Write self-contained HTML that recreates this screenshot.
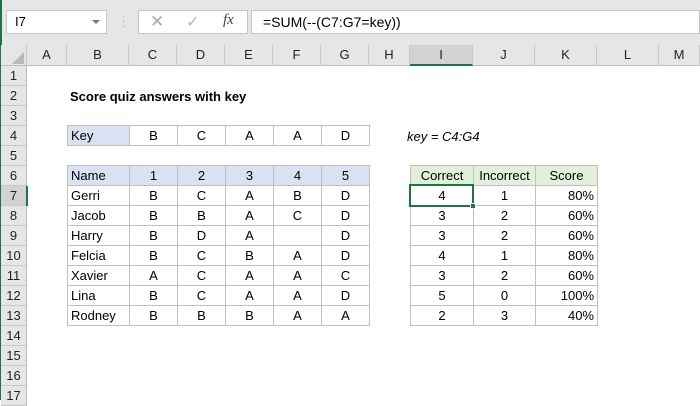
<!DOCTYPE html><html><head><style>
*{margin:0;padding:0;box-sizing:border-box}
body{width:700px;height:400px;overflow:hidden;background:#fff;font-family:"Liberation Sans",sans-serif;font-size:13px;color:#000;position:relative}
.a{position:absolute}
.hd{position:absolute;top:45px;height:21px;background:#e6e6e6;border-right:1px solid #c8c8c8;border-bottom:1px solid #bdbdbd;text-align:center;line-height:20px;color:#222;font-size:13px}
.rh{position:absolute;left:1px;width:26px;height:20px;background:#e6e6e6;border-bottom:1px solid #c8c8c8;border-right:1px solid #bdbdbd;text-align:center;line-height:20px;color:#222}
.c{position:absolute;height:21px;border:1px solid #c0c0c0;line-height:19px;text-align:center}
.l{text-align:left;padding-left:3px}
.r{text-align:right;padding-right:3px}
.blue{background:#d9e1f2}
.grn{background:#e2efda}
</style></head><body>
<div class="a" style="left:0;top:0;width:700px;height:45px;background:#e6e6e6"></div>
<div class="a" style="left:0;top:0;width:2px;height:400px;background:#217346"></div>
<div class="a" style="left:6px;top:10px;width:101px;height:24px;background:#fff;border:1px solid #c6c6c6;line-height:22px;padding-left:8px">I7</div>
<div class="a" style="left:92px;top:20px;width:0;height:0;border-left:4px solid transparent;border-right:4px solid transparent;border-top:4px solid #777"></div>
<div class="a" style="left:122px;top:14px;color:#999;font-size:10px;line-height:5px">·<br>·<br>·</div>
<div class="a" style="left:138px;top:10px;width:110px;height:24px;background:#fff;border:1px solid #c6c6c6"></div>
<div class="a" style="left:150px;top:12px;color:#aaa;font-size:17px">✕</div>
<div class="a" style="left:186px;top:12px;color:#bbb;font-size:16px">✓</div>
<div class="a" style="left:223px;top:12px;font-family:'Liberation Serif',serif;font-style:italic;font-size:15px;color:#444">fx</div>
<div class="a" style="left:251px;top:10px;width:449px;height:24px;background:#fff;border:1px solid #c6c6c6;line-height:22px;padding-left:11px;font-size:14px">=SUM(--(C7:G7=key))</div>
<div class="hd" style="left:1px;width:26px"></div>
<div class="a" style="left:12px;top:52px;width:0;height:0;border-left:12px solid transparent;border-bottom:12px solid #b8b8b8"></div>
<div class="hd" style="left:27px;width:40px">A</div>
<div class="hd" style="left:67px;width:62px">B</div>
<div class="hd" style="left:129px;width:48px">C</div>
<div class="hd" style="left:177px;width:48px">D</div>
<div class="hd" style="left:225px;width:48px">E</div>
<div class="hd" style="left:273px;width:48px">F</div>
<div class="hd" style="left:321px;width:48px">G</div>
<div class="hd" style="left:369px;width:41px">H</div>
<div class="hd" style="left:410px;width:63px;background:#d2d2d2;border-bottom:2px solid #217346">I</div>
<div class="hd" style="left:473px;width:62px">J</div>
<div class="hd" style="left:535px;width:62px">K</div>
<div class="hd" style="left:597px;width:62px">L</div>
<div class="hd" style="left:659px;width:41px">M</div>
<div class="rh" style="top:66px">1</div><div class="rh" style="top:86px">2</div><div class="rh" style="top:106px">3</div><div class="rh" style="top:126px">4</div><div class="rh" style="top:146px">5</div><div class="rh" style="top:166px">6</div><div class="rh" style="top:186px;background:#d2d2d2">7</div><div class="rh" style="top:206px">8</div><div class="rh" style="top:226px">9</div><div class="rh" style="top:246px">10</div><div class="rh" style="top:266px">11</div><div class="rh" style="top:286px">12</div><div class="rh" style="top:306px">13</div><div class="rh" style="top:326px">14</div><div class="rh" style="top:346px">15</div><div class="rh" style="top:366px">16</div><div class="rh" style="top:386px">17</div>
<div class="a" style="left:26px;top:186px;width:2px;height:20px;background:#217346"></div>
<div class="a" style="left:70px;top:88px;font-weight:bold;line-height:18px">Score quiz answers with key</div>
<div class="a" style="left:407px;top:128px;font-style:italic;line-height:18px">key = C4:G4</div>
<div id="t"></div>
<script>
var cols=[[67,63],[129,49],[177,49],[225,49],[273,49],[321,49]];
var h='';
function cell(x,y,w,txt,cls){h+='<div class="c '+cls+'" style="left:'+x+'px;top:'+y+'px;width:'+w+'px">'+txt+'</div>';}
var key=['Key','B','C','A','A','D'];
key.forEach(function(v,i){cell(cols[i][0],125,cols[i][1],v,i==0?'l blue':'');});
var rows=[['Name','1','2','3','4','5'],['Gerri','B','C','A','B','D'],['Jacob','B','B','A','C','D'],['Harry','B','D','A','','D'],['Felcia','B','C','B','A','D'],['Xavier','A','C','A','A','C'],['Lina','B','C','A','A','D'],['Rodney','B','B','B','A','A']];
rows.forEach(function(r,j){r.forEach(function(v,i){cell(cols[i][0],165+20*j,cols[i][1],v,(i==0?'l ':'')+(j==0?'blue':''));});});
var rc=[[410,64],[473,63],[535,63]];
var rr=[['Correct','Incorrect','Score'],['4','1','80%'],['3','2','60%'],['3','2','60%'],['4','1','80%'],['3','2','60%'],['5','0','100%'],['2','3','40%']];
rr.forEach(function(r,j){r.forEach(function(v,i){cell(rc[i][0],165+20*j,rc[i][1],v,(i==2&&j>0?'r ':'')+(j==0?'grn':''));});});
document.getElementById('t').innerHTML=h;
</script>
<div class="a" style="left:409px;top:184px;width:65px;height:23px;border:2px solid #217346"></div>
<div class="a" style="left:470px;top:203px;width:6px;height:6px;background:#217346;border:1px solid #fff"></div>
</body></html>
